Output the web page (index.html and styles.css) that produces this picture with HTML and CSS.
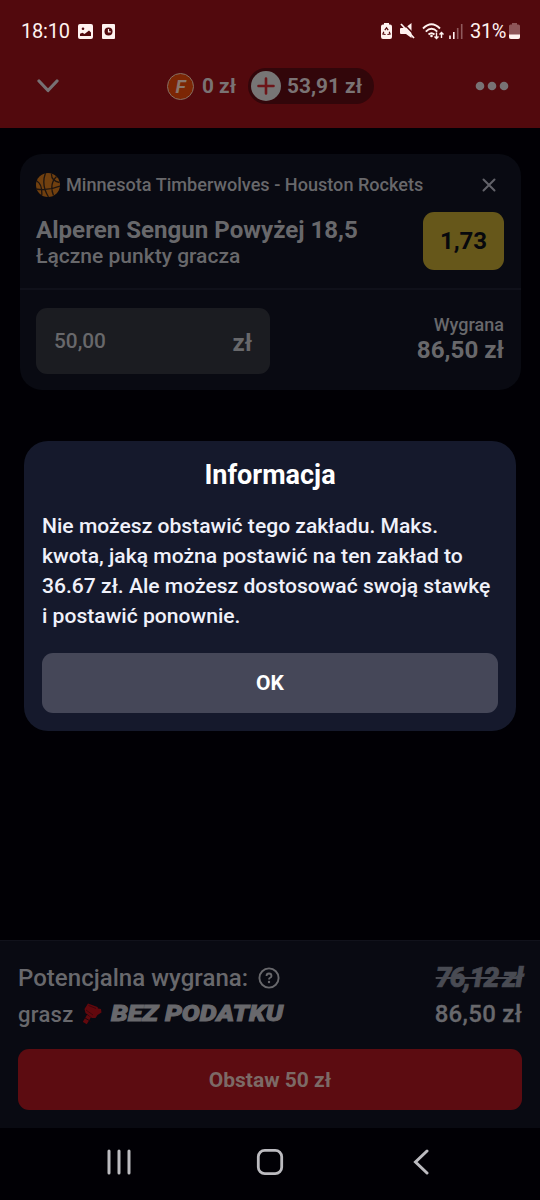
FILE: index.html
```html
<!DOCTYPE html>
<html lang="pl">
<head>
<meta charset="utf-8">
<title>Kupon</title>
<link rel="stylesheet" href="styles.css">
</head>
<body>
<div class="screen">
  <header class="top">
    <div class="status">
      <div class="status-left">
        <span class="clock">18:10</span>
        <svg class="ic-image" width="15" height="15" viewBox="0 0 15 15"><rect width="15" height="15" rx="2" fill="#fff2f0"/><circle cx="5" cy="4.800" r="1.300" fill="#52090d"/><path d="M2 12V9.800l2.500-1 2 1.200L11 6.500l2 2V12z" fill="#52090d"/></svg>
        <svg class="ic-doc" width="13" height="15" viewBox="0 0 13 15"><rect width="13" height="15" rx="1" fill="#fff2f0"/><circle cx="6.500" cy="7.500" r="4" fill="#52090d"/><path d="M6.500 5v2.800h2.200" fill="none" stroke="#fff2f0" stroke-width="1.200"/></svg>
      </div>
      <div class="status-right">
        <svg class="ic-saver" width="11" height="16" viewBox="0 0 11 16"><path d="M3 0h5v1.500h1q2 0 2 2V14q0 2-2 2H2q-2 0-2-2V3.500q0-2 2-2h1z" fill="#fff2f0"/><path d="M3.800 7.200 5.500 4.800l1.700 2.400M8.200 8.800l.9 2.200-2.700.5M4.600 11.500 1.900 11l.9-2.200" fill="none" stroke="#52090d" stroke-width="1.200"/></svg>
        <svg class="ic-mute" width="15" height="16" viewBox="0 0 15 16"><path d="M1 5h4l6.500-5v15L6 11H1q-1 0-1-1V6q0-1 1-1z" fill="#fff2f0"/><path d="M2.500-.5 16 13.500" stroke="#52090d" stroke-width="1.600"/><path d="M1 1 14 15" stroke="#fff2f0" stroke-width="1.800"/></svg>
        <svg class="ic-wifi" width="23" height="17" viewBox="0 0 23 17"><g fill="none" stroke="#fff2f0" stroke-width="1.900"><path d="M1 5.500q8.500-8.500 17 0M3.800 8.600q5.700-5.500 11.400 0M6.500 11.400q3-2.500 6 0"/></g><circle cx="9.500" cy="13" r="1.300" fill="#fff2f0"/><path d="M14.500 9.500v6M12.500 13.500l2 2 2-2M19.500 15V9.500M17.500 11.500l2-2 2 2" fill="none" stroke="#fff2f0" stroke-width="1.400"/></svg>
        <svg class="ic-signal" width="14" height="15" viewBox="0 0 14 15"><path d="M1 11.500v3.500M4.800 8v7" stroke="#fff2f0" stroke-width="1.600"/><path d="M8.700 4v11M12.700 0v15" stroke="#8f5a5d" stroke-width="1.600"/></svg>
        <span class="percent">31%</span>
        <svg class="ic-batt" width="11" height="16" viewBox="0 0 11 16"><path d="M3 0h5v1.500h1.500Q11 1.500 11 3v11q0 2-2 2H2q-2 0-2-2V3q0-1.500 1.500-1.500H3z" fill="#8e5558"/><path d="M0 11.500h11V14q0 2-2 2H2q-2 0-2-2z" fill="#fff2f0"/></svg>
      </div>
    </div>
    <div class="account">
      <svg class="chevron" width="22" height="14" viewBox="0 0 22 14"><path d="M2 2l9 9.500L20 2" fill="none" stroke="#777174" stroke-width="3.200" stroke-linecap="round" stroke-linejoin="round"/></svg>
      <div class="balances">
        <span class="freebet">F</span>
        <span class="money">0 zł</span>
        <div class="wallet">
          <svg width="30" height="30" viewBox="0 0 30 30"><circle cx="15" cy="15" r="15" fill="#777575"/><path d="M15 7.500v15M7.500 15h15" stroke="#6d1519" stroke-width="2.600" stroke-linecap="round"/></svg>
          <span class="money">53,91 zł</span>
        </div>
      </div>
      <svg class="more" width="34" height="10" viewBox="0 0 34 10"><g fill="#787274"><circle cx="5" cy="5" r="4.300"/><circle cx="17" cy="5" r="4.300"/><circle cx="29" cy="5" r="4.300"/></g></svg>
    </div>
  </header>

  <main class="content">
    <section class="bet">
      <div class="bet-head">
        <svg width="24" height="24" viewBox="0 0 24 24"><circle cx="12" cy="12" r="12" fill="#71400f"/><g fill="none" stroke="#1d1410" stroke-width="1.300"><path d="M0 16q12 2 24-3M9.500 0Q5 12 12.500 24M15.500 .5Q15 8 23.500 9.500M20.500 3.500Q13 11 17.500 22.500M.8 8q5.500 3 5 14"/></g></svg>
        <span class="match">Minnesota Timberwolves - Houston Rockets</span>
        <svg class="close" width="14" height="14" viewBox="0 0 14 14"><path d="M1.500 1.500l11 11M12.500 1.500l-11 11" stroke="#626269" stroke-width="2" stroke-linecap="round"/></svg>
      </div>
      <div class="bet-body">
        <div>
          <div class="pick">Alperen Sengun Powyżej 18,5</div>
          <div class="market">Łączne punkty gracza</div>
        </div>
        <div class="odds">1,73</div>
      </div>
      <div class="stake-row">
        <div class="stake"><span class="amount">50,00</span><span class="unit">zł</span></div>
        <div class="win"><div class="win-label">Wygrana</div><div class="win-value">86,50 zł</div></div>
      </div>
    </section>
  </main>

  <footer class="summary">
    <div class="sum-row">
      <span class="potential">Potencjalna wygrana:</span>
      <svg class="help" width="22" height="22" viewBox="0 0 22 22"><circle cx="11" cy="11" r="9.600" fill="none" stroke="#68686c" stroke-width="1.900"/><path d="M8.500 9q0-2.500 2.500-2.500T13.500 9q0 1.200-1.300 1.800T11 12.500" fill="none" stroke="#68686c" stroke-width="1.800"/><circle cx="11" cy="15" r="1.200" fill="#68686c"/></svg>
      <span class="old">76,12 zł</span>
    </div>
    <div class="sum-row second">
      <span class="play">grasz</span>
      <svg class="glove" width="19" height="22" viewBox="0 0 19 22"><path d="M5 .5 14.500 4l.5 1.500 3 .5.500 3.500-4 2.500-2 3-3.500 0L2.500 10 1.500 6z" fill="#62080d"/><path d="M5.500 2.500 13 5.500M3 7l7 5" stroke="#35060b" stroke-width=".8"/><path d="M6 13 1.800 20" stroke="#62080d" stroke-width="4.600"/><path d="M2 15l6 3.500" stroke="#1c070e" stroke-width="1"/></svg>
      <span class="notax">BEZ PODATKU</span>
      <span class="total">86,50 zł</span>
    </div>
    <div class="place">Obstaw 50 zł</div>
  </footer>

  <nav class="nav">
    <svg width="24" height="26" viewBox="0 0 24 26"><path d="M2 2v22M12 2v22M22 2v22" stroke="#bcbbc0" stroke-width="3" stroke-linecap="round"/></svg>
    <svg width="28" height="28" viewBox="0 0 28 28"><rect x="2.300" y="2.300" width="23.400" height="23.400" rx="6.500" fill="none" stroke="#bcbbc0" stroke-width="2.800"/></svg>
    <svg width="18" height="26" viewBox="0 0 18 26"><path d="M15 2 3.500 13 15 24" fill="none" stroke="#bcbbc0" stroke-width="3" stroke-linecap="round"/></svg>
  </nav>

  <div class="dialog">
    <h1>Informacja</h1>
    <p>Nie możesz obstawić tego zakładu. Maks.<br>kwota, jaką można postawić na ten zakład to<br>36.67 zł. Ale możesz dostosować swoją stawkę<br>i postawić ponownie.</p>
    <div class="ok">OK</div>
  </div>
</div>
</body>
</html>
```

FILE: styles.css
```css
* { box-sizing: border-box; }
body { margin: 0; font-family: Roboto, "Noto Sans", sans-serif; background: #010005; }
svg { display: block; flex: none; }
span, .pick, .market, .win-value, .win-label { white-space: nowrap; }
.screen { position: relative; width: 540px; height: 1200px; display: flex; flex-direction: column; overflow: hidden; }

.top { height: 128px; background: #52090d; }
.status { height: 62px; padding: 0 20px 0 21px; display: flex; justify-content: space-between; align-items: center; color: #fff2f0; font-size: 20px; }
.status-left, .status-right { display: flex; align-items: center; }
.clock { letter-spacing: -.2px; }
.ic-image { margin-left: 8px; }
.ic-doc { margin-left: 9px; }
.ic-mute { margin-left: 8px; }
.ic-wifi { margin-left: 7px; }
.ic-signal { margin-left: 4px; }
.percent { margin-left: 7px; letter-spacing: -.4px; }
.ic-batt { margin-left: 3px; }

.account { height: 48px; display: flex; align-items: center; padding: 0 31px 0 37px; }
.balances { display: flex; align-items: center; margin-left: 108px; }
.freebet { width: 27px; height: 27px; border-radius: 50%; border: 1.5px solid #857064; background: #7c2604; color: #89766d; font: italic 700 19px/25px Roboto, sans-serif; text-align: center; }
.money { color: #7a7374; font-size: 20.8px; font-weight: 700; }
.freebet + .money { margin-left: 8px; }
.wallet { display: flex; align-items: center; width: 126px; height: 36px; margin-left: 12px; padding-left: 3px; gap: 6px; border-radius: 18px; background: #32060a; }
.more { margin-left: auto; }

.content { height: 812px; padding: 26px 19px 0 20px; }
.bet { height: 236px; border-radius: 22px; background: #090a12; color: #68686b; }
.bet-head { display: flex; align-items: center; height: 62px; padding: 0 25px 0 16px; }
.match { margin: -1px 0 0 6px; font-size: 18.1px; font-weight: 500; }
.close { margin-left: auto; }
.bet-body { display: flex; justify-content: space-between; height: 74px; padding: 0 17px 0 16px; border-bottom: 2px solid #10111a; }
.pick { font-size: 24.1px; line-height: 28px; font-weight: 700; }
.market { font-size: 21px; line-height: 26px; margin-top: -1px; font-weight: 500; }
.odds { width: 81px; height: 58px; border-radius: 11px; margin-top: -4px; background: #66571a; color: #07080d; font-size: 24px; line-height: 59px; font-weight: 700; text-align: center; }
.stake-row { display: flex; justify-content: space-between; padding: 18px 17px 0 16px; }
.stake { width: 234px; height: 66px; border-radius: 11px; background: #1b1c21; padding: 0 18px; display: flex; align-items: center; justify-content: space-between; }
.amount { font-size: 20.8px; font-weight: 500; }
.unit { font-size: 24px; font-weight: 700; padding-top: 4px; }
.win { text-align: right; padding-top: 6px; }
.win-label { font-size: 18px; line-height: 22px; font-weight: 500; }
.win-value { font-size: 24.2px; line-height: 28px; font-weight: 700; }

.summary { height: 188px; padding: 21px 18px 0; border-top: 1px solid #11121b; background: #090a12; color: #68686c; }
.sum-row { display: flex; align-items: center; height: 32px; }
.potential { width: 230px; font-size: 24px; font-weight: 500; letter-spacing: .03px; }
.help { margin-left: 10px; }
.old { margin-left: auto; color: #494b53; font: italic 900 28px/32px Roboto, sans-serif; letter-spacing: -1.7px; -webkit-text-stroke: .7px #494b53; text-decoration: line-through; text-decoration-thickness: 2px; }
.second { height: 40px; }
.play { width: 56px; font-size: 22px; font-weight: 500; letter-spacing: .3px; }
.glove { margin-left: 9px; }
.notax { width: 174px; margin-left: 9px; font: italic 900 22px/30px Roboto, sans-serif; -webkit-text-stroke: .9px #68686c; transform: scaleX(1.22); transform-origin: left; }
.total { margin-left: auto; font-size: 24px; font-weight: 500; letter-spacing: .3px; -webkit-text-stroke: .3px #68686c; }
.place { height: 61px; margin-top: 15px; border-radius: 11px; background: #5c0c11; color: #7c6a66; font-size: 21px; line-height: 62px; font-weight: 700; text-align: center; }

.nav { height: 72px; padding: 0 110px 4px 107px; display: flex; align-items: center; justify-content: space-between; background: #010005; }
.nav svg:nth-child(2) { margin-right: 3px; }

.dialog { position: absolute; left: 24px; top: 441px; width: 492px; height: 290px; border-radius: 24px; background: #15192c; padding: 17px 18px 18px; }
.dialog h1 { margin: 0; color: #fff; font-size: 27px; line-height: 34px; font-weight: 700; text-align: center; }
.dialog p { margin: 19px 0 0; color: #f0f1fa; font-size: 21.1px; line-height: 30px; font-weight: 500; white-space: nowrap; }
.ok { height: 60px; margin-top: 22px; border-radius: 11px; background: #454758; color: #fff; font-size: 21px; line-height: 60px; font-weight: 700; text-align: center; }
```
